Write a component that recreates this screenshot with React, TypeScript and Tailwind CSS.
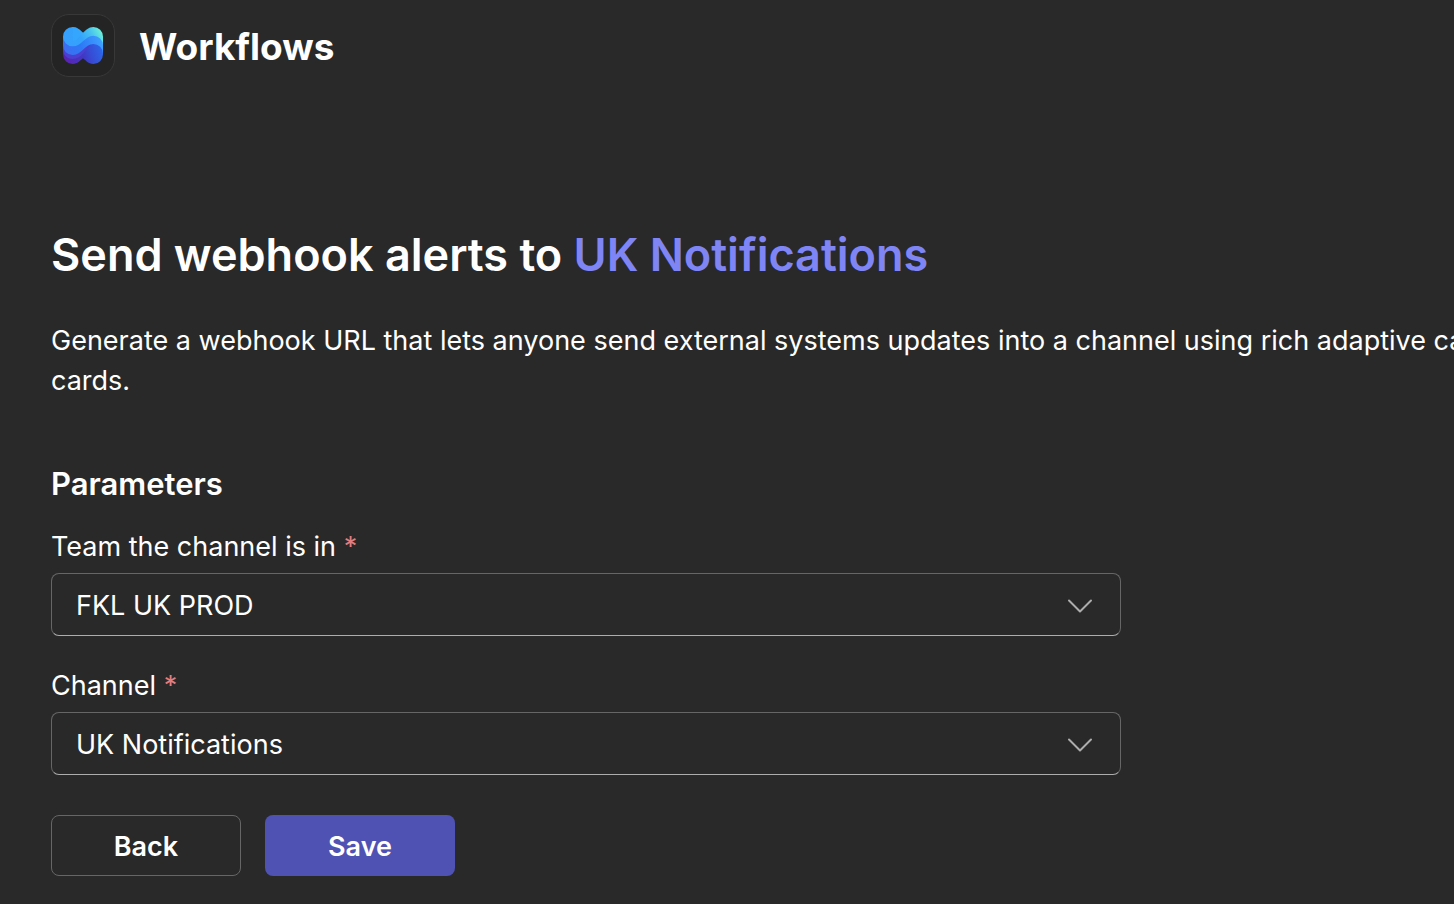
import { useState } from "react";

function WorkflowsLogo() {
  return (
    <svg viewBox="9 9 120 111" className="h-[37px] w-10" aria-hidden="true">
      <defs>
        <linearGradient id="ribbonTop" x1="30" y1="70" x2="125" y2="20" gradientUnits="userSpaceOnUse">
          <stop offset="0" stopColor="#36a0ff" />
          <stop offset="0.4" stopColor="#33a3fb" />
          <stop offset="0.7" stopColor="#48c2ee" />
          <stop offset="1" stopColor="#6cf2d6" />
        </linearGradient>
        <linearGradient id="ribbonMiddle" x1="9" y1="80" x2="129" y2="50" gradientUnits="userSpaceOnUse">
          <stop offset="0" stopColor="#3f6cf0" />
          <stop offset="0.45" stopColor="#2c79f6" />
          <stop offset="1" stopColor="#3fa2ff" />
        </linearGradient>
        <linearGradient id="ribbonBottom" x1="20" y1="110" x2="129" y2="75" gradientUnits="userSpaceOnUse">
          <stop offset="0" stopColor="#5824b2" />
          <stop offset="0.45" stopColor="#4038c4" />
          <stop offset="0.7" stopColor="#3550d8" />
          <stop offset="1" stopColor="#2c68ea" />
        </linearGradient>
      </defs>
      <path
        d="M9 62V91A29 29 0 0 0 38 120C53 120 60 110 69 103C78 110 85 120 100 120A29 29 0 0 0 129 91V58H60Z"
        fill="url(#ribbonBottom)"
      />
      <path
        d="M9 72A29 29 0 0 0 38 105C64 105 74 78 92 63L60 55L9 60Z"
        fill="#4a3fd0"
      />
      <path
        d="M9 38V64A29 29 0 0 0 38 93C66 93 74 60 100 60A29 29 0 0 1 129 89V38L100 28L38 40Z"
        fill="url(#ribbonMiddle)"
      />
      <path
        d="M38 9C53 9 60 19 69 26C78 19 85 9 100 9A29 29 0 0 1 129 38V64A29 29 0 0 0 100 35C74 35 66 67 38 67A29 29 0 0 1 38 9Z"
        fill="url(#ribbonTop)"
      />
      <path
        d="M38 9C53 9 60 19 69 26L60 36C54 45 47 51 38 51Z"
        fill="#36a8ff"
        opacity="0.6"
      />
    </svg>
  );
}

type FieldProps = { id: string; label: string; options: string[] };

function SelectField({ id, label, options }: FieldProps) {
  const [value, setValue] = useState(options[0]);
  return (
    <div className="flex flex-col gap-1.5">
      <label htmlFor={id} className="text-[27px] leading-10">
        {label} <span className="text-[#e37d80]">*</span>
      </label>
      <div className="grid items-center">
        <select
          id={id}
          required
          value={value}
          onChange={(e) => setValue(e.target.value)}
          className="col-start-1 row-start-1 h-[63px] w-full appearance-none rounded-lg border border-[#666666] border-b-[#adadad] bg-[#292929] pt-1 pr-16 pl-6 text-[27px] text-white"
        >
          {options.map((option) => (
            <option key={option}>{option}</option>
          ))}
        </select>
        <svg
          viewBox="0 0 26 14"
          className="pointer-events-none col-start-1 row-start-1 mt-0.5 mr-7 h-3.5 w-[26px] justify-self-end"
          fill="none"
          stroke="#adadad"
          strokeWidth="2"
          strokeLinecap="round"
          strokeLinejoin="round"
          aria-hidden="true"
        >
          <path d="M2 1.5 13 12.5 24 1.5" />
        </svg>
      </div>
    </div>
  );
}

export default function App() {
  return (
    <div className="min-h-screen overflow-hidden bg-[#292929] px-[51px] pt-3.5 pb-7 font-['Inter',sans-serif] text-white">
      <header className="flex items-center gap-6">
        <div className="flex h-[63px] w-16 items-center justify-center rounded-[18px] border border-[#383838] bg-[#242424]">
          <WorkflowsLogo />
        </div>
        <span className="pt-0.5 text-[37px] leading-12 font-bold">Workflows</span>
      </header>

      <main className="mt-[146px]">
        <h1 className="text-[45px] leading-16 font-semibold">
          Send webhook alerts to <span className="text-[#7f85f5]">UK Notifications</span>
        </h1>
        <p className="mt-[34px] text-[27px] leading-10 whitespace-nowrap">
          Generate a webhook URL that lets anyone send external systems updates into a channel using rich adaptive ca
          <br />
          cards.
        </p>

        <form onSubmit={(e) => e.preventDefault()}>
          <h2 className="mt-[61px] text-[31px] leading-11 font-semibold">Parameters</h2>
          <div className="mt-[21px] flex max-w-[1070px] flex-col gap-[30px]">
            <SelectField id="team" label="Team the channel is in" options={["FKL UK PROD"]} />
            <SelectField id="channel" label="Channel" options={["UK Notifications"]} />
          </div>
          <div className="mt-10 flex gap-6">
            <button
              type="button"
              className="h-[61px] w-[190px] rounded-lg border border-[#666666] pt-1 text-[27px] font-semibold"
            >
              Back
            </button>
            <button
              type="submit"
              className="h-[61px] w-[190px] rounded-lg bg-[#4f52b2] pt-1 text-[27px] font-semibold"
            >
              Save
            </button>
          </div>
        </form>
      </main>
    </div>
  );
}
